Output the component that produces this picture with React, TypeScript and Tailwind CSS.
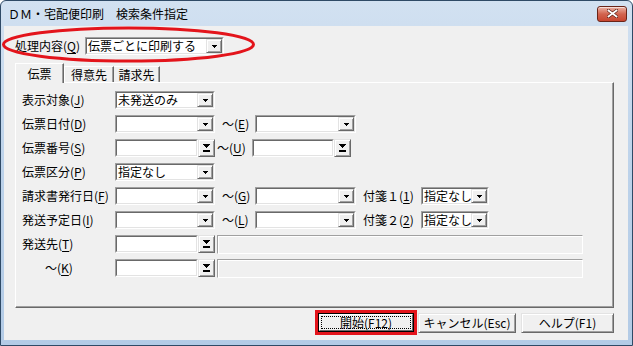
import React from "react";

const F = "font-['Noto_Sans_CJK_JP',sans-serif]";

function U({ c }: { c: string }) {
  return <span className="underline underline-offset-[2px] decoration-[1px]">{c}</span>;
}

function SmallArrow() {
  return (
    <svg width="5" height="3" viewBox="0 0 5 3" shapeRendering="crispEdges">
      <path d="M0 0h5v1H0zM1 1h3v1H1zM2 2h1v1H2z" fill="#000" />
    </svg>
  );
}

function BigArrow() {
  return (
    <svg width="7" height="8" viewBox="0 0 7 8" shapeRendering="crispEdges">
      <path d="M0 0h7v1H0zM1 1h5v1H1zM2 2h3v1H2zM3 3h1v1H3zM0 6h7v2H0z" fill="#000" />
    </svg>
  );
}

function Raised({ className, children }: { className: string; children?: React.ReactNode }) {
  return (
    <div
      className={`flex items-center justify-center bg-[#f0f0f0] border border-t-[#e3e3e3] border-l-[#e3e3e3] border-r-[#696969] border-b-[#696969] shadow-[inset_1px_1px_0_#fff,inset_-1px_-1px_0_#a0a0a0] shrink-0 ${className}`}
    >
      {children}
    </div>
  );
}

function Sunken({ className, children }: { className: string; children?: React.ReactNode }) {
  return (
    <div
      className={`flex shrink-0 border border-t-[#a0a0a0] border-l-[#a0a0a0] border-r-white border-b-white ${className}`}
    >
      <div className="flex flex-1 min-w-0 bg-white border border-t-[#696969] border-l-[#696969] border-r-[#e3e3e3] border-b-[#e3e3e3]">
        {children}
      </div>
    </div>
  );
}

function Combo({ className, text = "" }: { className: string; text?: string }) {
  return (
    <Sunken className={`h-[18px] ${className}`}>
      <span className="flex-1 min-w-0 pl-[1px] leading-[14px] whitespace-nowrap">{text}</span>
      <Raised className="w-[16px] h-full">
        <SmallArrow />
      </Raised>
    </Sunken>
  );
}

function Picker({ className }: { className: string }) {
  return (
    <div className="flex items-center">
      <Sunken className={`h-[18px] ${className}`} />
      <Raised className="w-[17px] h-[18px]">
        <BigArrow />
      </Raised>
    </div>
  );
}

function Row({ label, children }: { label: React.ReactNode; children: React.ReactNode }) {
  return (
    <div className="flex items-center h-[18px]">
      <span className="w-[93px] shrink-0 leading-[16px] whitespace-nowrap">{label}</span>
      {children}
    </div>
  );
}

function Flat({ className }: { className: string }) {
  return (
    <div
      className={`h-[19px] shrink-0 bg-[#f0f0f0] border border-t-[#a0a0a0] border-l-[#a0a0a0] border-r-white border-b-white shadow-[inset_1px_1px_0_#fff] ${className}`}
    />
  );
}

export default function App() {
  return (
    <div className={`relative w-[633px] h-[346px] flex flex-col rounded-t-[6px] border border-[#2f4a66] bg-gradient-to-b from-[#d2e1f1] via-[#bcd2ea] to-[#b3cbe6] text-[12px] text-black ${F}`}>
      {/* title bar */}
      <div className="h-[25px] flex items-center justify-between pl-[7px] pr-[5px]">
        <span className="leading-[16px]">ＤＭ・宅配便印刷　検索条件指定</span>
        <div className="w-[30px] h-[16px] flex items-center justify-center rounded-[3px] border border-[#6a2418] bg-gradient-to-b from-[#eab2a5] via-[#d2644f] to-[#c8452f] shadow-[inset_0_1px_0_rgba(255,255,255,0.6)]">
          <svg width="11" height="9" viewBox="0 0 11 9">
            <path d="M1.5 1.5l8 6M9.5 1.5l-8 6" stroke="#5a1c12" strokeWidth="3.2" strokeLinecap="square" />
            <path d="M1.5 1.5l8 6M9.5 1.5l-8 6" stroke="#fff" strokeWidth="1.8" strokeLinecap="square" />
          </svg>
        </div>
      </div>

      {/* client */}
      <div className="flex-1 ml-[3px] mr-[4px] mb-[5px] bg-[#f0f0f0] flex flex-col">
        <div className="mt-[11px] pl-[11px] flex items-center h-[18px]">
          <span className="w-[70px] leading-[16px] whitespace-nowrap">
            処理内容(<U c="Q" />)
          </span>
          <Combo className="w-[139px]" text="伝票ごとに印刷する" />
        </div>

        {/* tabs */}
        <div className="mt-[8px] ml-[11px] h-[20px] -mb-[1px] flex items-end relative z-10">
          <div className="w-[49px] h-[20px] flex items-center justify-center bg-[#f0f0f0] border-t border-l border-t-white border-l-white border-r border-r-[#696969] shadow-[inset_-1px_0_0_#a0a0a0] leading-[16px]">
            伝票
          </div>
          <div className="w-[50px] h-[16px] mb-[1px] flex items-center justify-center border-t border-l border-t-white border-l-white border-r border-r-[#696969] shadow-[inset_-1px_0_0_#a0a0a0] leading-[14px]">
            得意先
          </div>
          <div className="w-[46px] h-[16px] mb-[1px] flex items-center justify-center border-t border-t-white border-r border-r-[#696969] shadow-[inset_-1px_0_0_#a0a0a0] leading-[14px]">
            請求先
          </div>
        </div>

        {/* panel */}
        <div className="ml-[11px] w-[599px] h-[226px] pt-[8px] pl-[6px] flex flex-col gap-[6px] border border-t-white border-l-white border-r-[#696969] border-b-[#696969] shadow-[inset_-1px_-1px_0_#a0a0a0]">
          <Row label={<>表示対象(<U c="J" />)</>}>
            <Combo className="w-[100px]" text="未発送のみ" />
          </Row>
          <Row label={<>伝票日付(<U c="D" />)</>}>
            <Combo className="w-[100px]" />
            <span className="w-[40px] pl-[7px] leading-[16px] whitespace-nowrap">～(<U c="E" />)</span>
            <Combo className="w-[101px]" />
          </Row>
          <Row label={<>伝票番号(<U c="S" />)</>}>
            <Picker className="w-[83px]" />
            <span className="w-[37px] pl-[2px] leading-[16px] whitespace-nowrap">～(<U c="U" />)</span>
            <Picker className="w-[82px]" />
          </Row>
          <Row label={<>伝票区分(<U c="P" />)</>}>
            <Combo className="w-[100px]" text="指定なし" />
          </Row>
          <Row label={<>請求書発行日(<U c="F" />)</>}>
            <Combo className="w-[100px]" />
            <span className="w-[40px] pl-[7px] leading-[16px] whitespace-nowrap">～(<U c="G" />)</span>
            <Combo className="w-[101px]" />
            <span className="w-[65px] pl-[7px] leading-[16px] whitespace-nowrap">付箋１(<U c="1" />)</span>
            <Combo className="w-[68px]" text="指定なし" />
          </Row>
          <Row label={<>発送予定日(<U c="I" />)</>}>
            <Combo className="w-[100px]" />
            <span className="w-[40px] pl-[7px] leading-[16px] whitespace-nowrap">～(<U c="L" />)</span>
            <Combo className="w-[101px]" />
            <span className="w-[65px] pl-[7px] leading-[16px] whitespace-nowrap">付箋２(<U c="2" />)</span>
            <Combo className="w-[68px]" text="指定なし" />
          </Row>
          <Row label={<>発送先(<U c="T" />)</>}>
            <Picker className="w-[83px]" />
            <Flat className="ml-[2px] w-[366px]" />
          </Row>
          <Row label={<span className="pl-[23px]">～(<U c="K" />)</span>}>
            <Picker className="w-[83px]" />
            <Flat className="ml-[2px] w-[366px]" />
          </Row>
        </div>

        {/* buttons */}
        <div className="mt-[2px] pr-[14px] flex items-center justify-end">
          <div className="border-[3px] border-[#e3141b]">
            <div className="w-[96px] h-[19px] border border-black">
              <div className="h-full p-[1px] border border-t-white border-l-white border-r-[#696969] border-b-[#696969]">
                <div className="h-full border border-dotted border-black flex items-center justify-center leading-[12px]">
                  開始(F12)
                </div>
              </div>
            </div>
          </div>
          <Raised className="ml-[1px] w-[98px] h-[20px] leading-[16px]">キャンセル(Esc)</Raised>
          <Raised className="ml-[5px] w-[93px] h-[20px] leading-[16px]">ヘルプ(F1)</Raised>
        </div>
      </div>

      {/* red ellipse annotation */}
      <svg className="absolute left-0 top-0 pointer-events-none" width="633" height="346">
        <ellipse cx="127.5" cy="43.5" rx="125" ry="16.5" fill="none" stroke="#e3141b" strokeWidth="3" />
      </svg>
    </div>
  );
}
